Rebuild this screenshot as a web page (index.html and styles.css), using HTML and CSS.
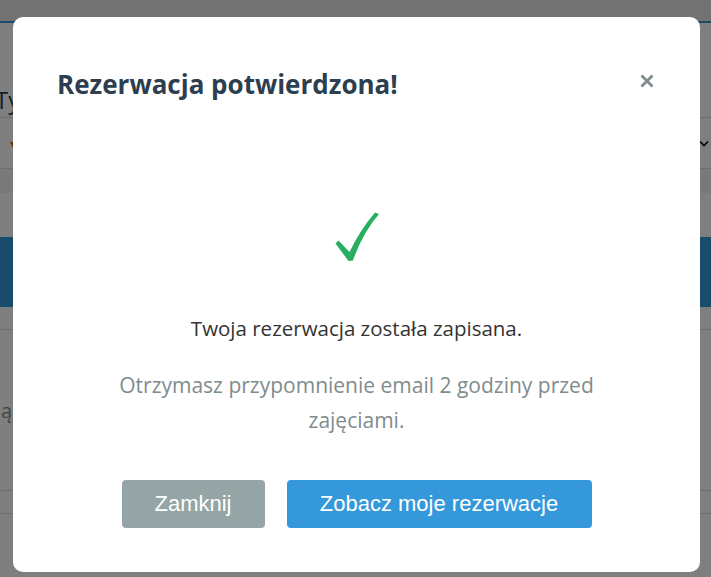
FILE: index.html
```html
<!DOCTYPE html>
<html lang="pl">
<head>
<meta charset="utf-8">
<title>Rezerwacja potwierdzona</title>
<link rel="stylesheet" href="styles.css">
</head>
<body>
<div class="page">
  <div class="topbar"></div>
  <div class="filters">
    <h2 class="filters-title">Typ zajęć</h2>
    <div class="select-row">
      <span class="select-icon">▾</span>
      <svg class="select-chevron" width="10" height="7" viewBox="0 0 10 7"><path d="M1 1.5 L5 5.5 L9 1.5" fill="none" stroke="#000" stroke-width="1.6"/></svg>
    </div>
    <div class="band"></div>
  </div>
  <div class="hero"></div>
  <div class="list">
    <div class="list-row"><span class="row-text">ą</span><span class="row-badge"></span></div>
    <div class="list-row small"></div>
  </div>
</div>

<div class="overlay">
  <div class="modal" role="dialog" aria-labelledby="modal-title">
    <div class="modal-header">
      <h2 class="modal-title" id="modal-title">Rezerwacja potwierdzona!</h2>
      <button class="modal-close" aria-label="Zamknij">
        <svg width="14" height="14" viewBox="0 0 14 14"><path d="M1.5 1.5 L12.5 12.5 M12.5 1.5 L1.5 12.5" stroke="#7f8c8d" stroke-width="2.8" fill="none"/></svg>
      </button>
    </div>
    <div class="modal-body">
      <svg class="success-icon" width="44" height="50" viewBox="0 0 44 50"><path d="M0.5 31.5 L3.5 28.5 L14.5 40 Q25 18 40 0.5 L44 2 Q27.5 21 18 48.5 L13.5 49 Z" fill="#27ae60"/></svg>
      <p class="success-text">Twoja rezerwacja została zapisana.</p>
      <p class="reminder-text">Otrzymasz przypomnienie email 2 godziny przed zajęciami.</p>
      <div class="modal-actions">
        <button class="btn btn-secondary">Zamknij</button>
        <button class="btn btn-primary">Zobacz moje rezerwacje</button>
      </div>
    </div>
  </div>
</div>
</body>
</html>
```
FILE: styles.css
```css
* { box-sizing: border-box; }
html, body { margin: 0; padding: 0; }
body {
  width: 711px;
  height: 577px;
  overflow: hidden;
  background: #ffffff;
  font-family: "Open Sans", "Noto Sans", sans-serif;
}

/* underlying page */
.page { width: 100%; }
.topbar {
  height: 23px;
  background: #e4e4e4;
  border-bottom: 2px solid #3498db;
}
.filters-title {
  margin: 0;
  height: 95px;
  padding-top: 62px;
  font-size: 24px;
  line-height: 30px;
  font-weight: 400;
  color: #2c3e50;
  text-indent: -5px;
  white-space: nowrap;
  border-bottom: 1px solid #dcdcdc;
}
.select-row {
  height: 51px;
  display: flex;
  align-items: center;
  justify-content: space-between;
  padding: 0 2px 0 10px;
  border-bottom: 1px solid #dcdcdc;
}
.select-icon { color: #b5651d; font-size: 14px; }
.select-chevron { display: block; }
.band { height: 24px; background: #f2f2f2; }
.hero {
  margin-top: 44px;
  height: 70px;
  background: #3498db;
}
.list { margin-top: 22px; border-top: 1px solid #dcdcdc; }
.list-row {
  height: 161px;
  display: flex;
  align-items: center;
  gap: 2px;
  padding-left: 1px;
  border-bottom: 1px solid #dcdcdc;
}
.list-row.small { height: 23px; }
.row-text { color: #7f8c8d; font-size: 20px; }
.row-badge { width: 4px; height: 14px; background: #e67e22; }

/* overlay + modal */
.overlay {
  position: fixed;
  inset: 0;
  background: rgba(0, 0, 0, 0.5);
  display: flex;
  align-items: flex-start;
  padding: 17px 0 0 13px;
}
.modal {
  width: 687px;
  background: #ffffff;
  border-radius: 10px;
  padding: 0 0 44px;
}
.modal-header {
  display: flex;
  align-items: center;
  justify-content: space-between;
  padding: 51px 41px 0 44px;
}
.modal-title {
  margin: 0;
  font-size: 26px;
  line-height: 32px;
  font-weight: 700;
  color: #2c3e50;
}
.modal-close {
  width: 24px;
  height: 24px;
  margin-bottom: 6px;
  padding: 0;
  border: 0;
  background: transparent;
  display: flex;
  align-items: center;
  justify-content: center;
  cursor: pointer;
}
.modal-body {
  display: flex;
  flex-direction: column;
  align-items: center;
  text-align: center;
}
.success-icon { display: block; margin-top: 112px; }
.success-text {
  margin: 51px 0 0;
  font-size: 20.5px;
  line-height: 30px;
  color: #333333;
}
.reminder-text {
  margin: 25px 0 0;
  max-width: 490px;
  font-size: 21px;
  line-height: 35px;
  color: #7f8c8d;
}
.modal-actions {
  margin-top: 42px;
  display: flex;
  gap: 22px;
  justify-content: center;
}
.btn {
  height: 48px;
  padding: 0;
  border: 0;
  border-radius: 4px;
  font-family: "Liberation Sans", Arial, sans-serif;
  font-size: 22px;
  color: #ffffff;
  cursor: pointer;
}
.btn-secondary { background: #95a5a6; width: 143px; }
.btn-primary { background: #3498db; width: 305px; }
```
